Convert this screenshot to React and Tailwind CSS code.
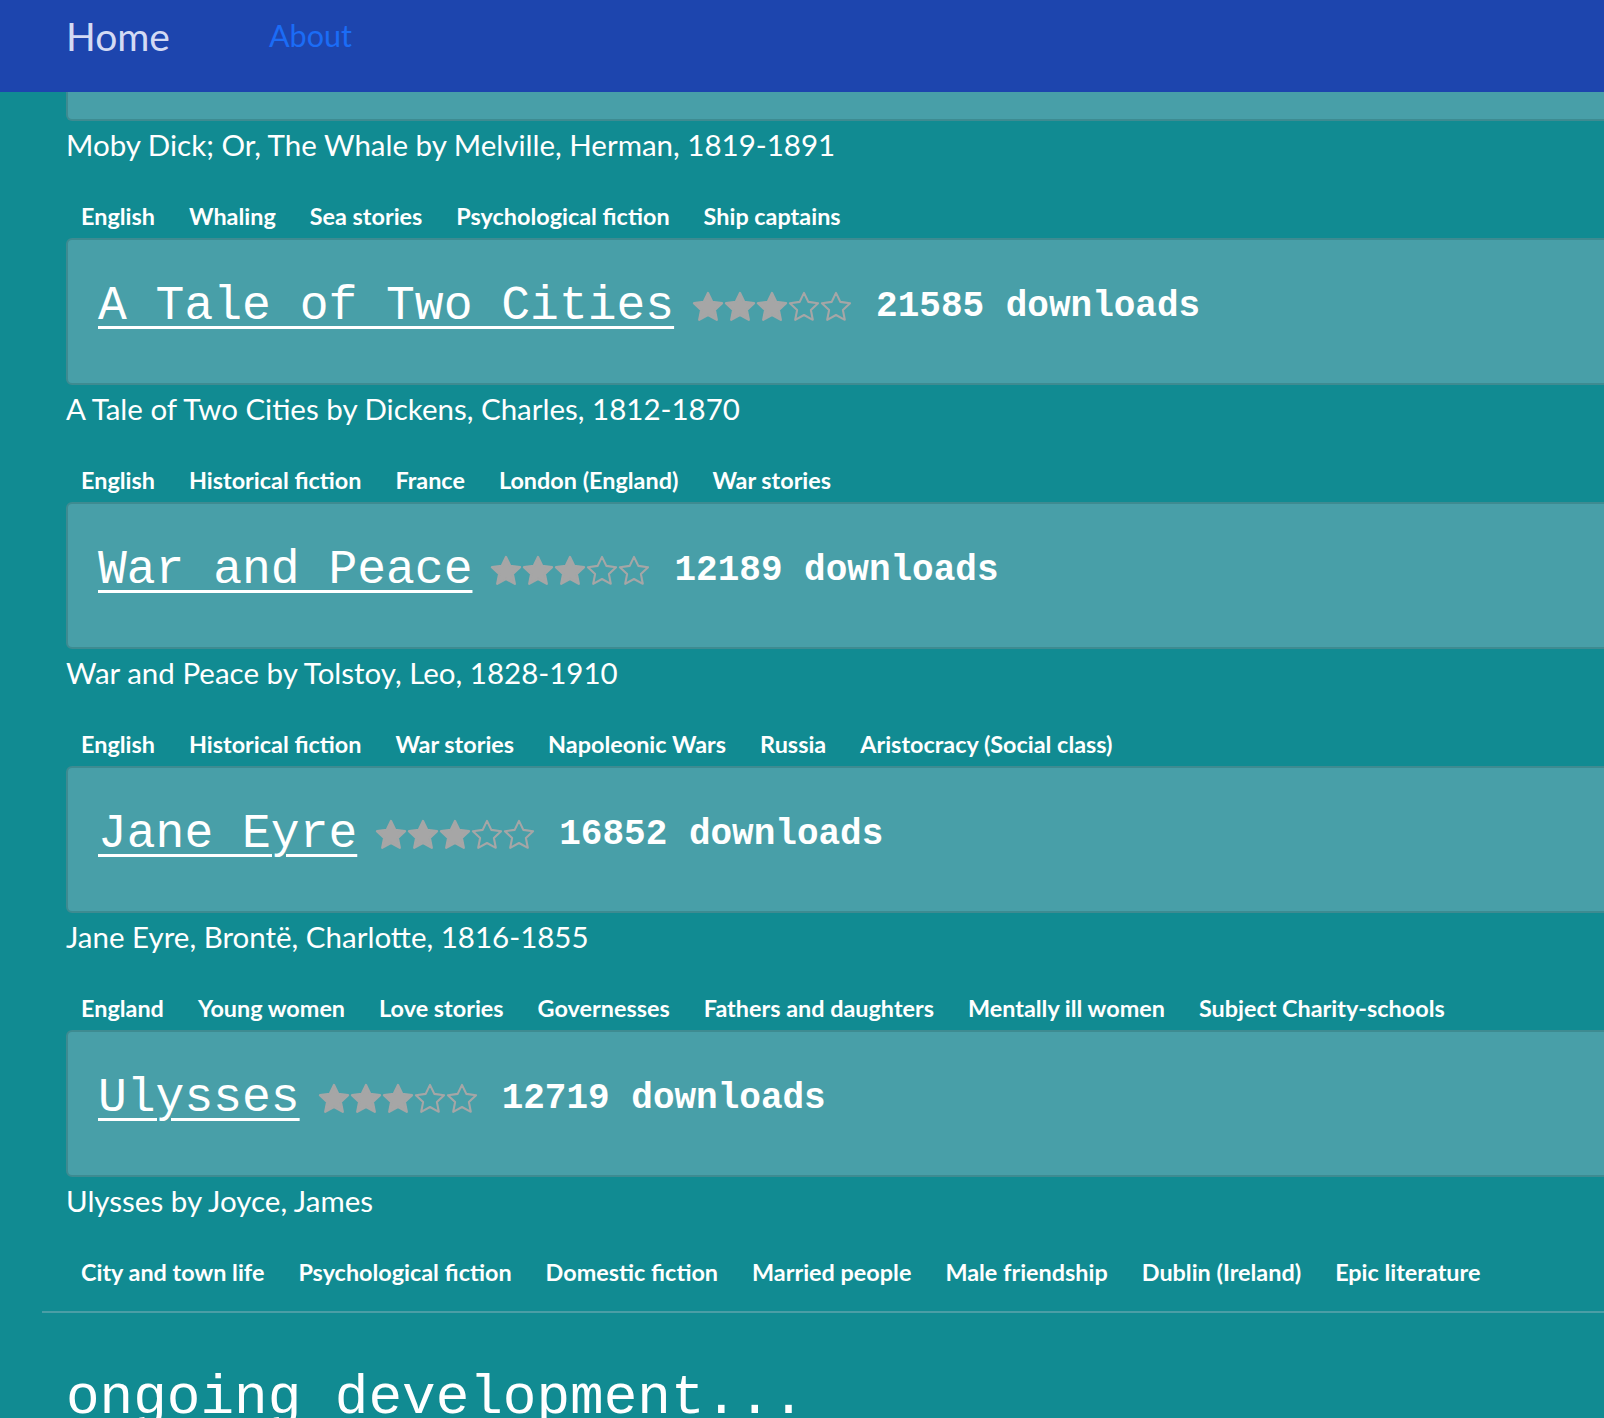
import React from "react";

const books = [
  {
    title: "A Tale of Two Cities",
    downloads: 21585,
    desc: "A Tale of Two Cities by Dickens, Charles, 1812-1870",
    tags: ["English", "Historical fiction", "France", "London (England)", "War stories"],
  },
  {
    title: "War and Peace",
    downloads: 12189,
    desc: "War and Peace by Tolstoy, Leo, 1828-1910",
    tags: ["English", "Historical fiction", "War stories", "Napoleonic Wars", "Russia", "Aristocracy (Social class)"],
  },
  {
    title: "Jane Eyre",
    downloads: 16852,
    desc: "Jane Eyre, Brontë, Charlotte, 1816-1855",
    tags: ["England", "Young women", "Love stories", "Governesses", "Fathers and daughters", "Mentally ill women", "Subject Charity-schools"],
  },
  {
    title: "Ulysses",
    downloads: 12719,
    desc: "Ulysses by Joyce, James",
    tags: ["City and town life", "Psychological fiction", "Domestic fiction", "Married people", "Male friendship", "Dublin (Ireland)", "Epic literature"],
  },
];

const sans = { fontFamily: "Lato, 'Open Sans', sans-serif" };
const mono = { fontFamily: "'Liberation Mono', 'Courier New', monospace" };

function Star({ filled }) {
  return (
    <svg width="32" height="32" viewBox="2 2 20 20" className="shrink-0">
      <path
        d="M12 3.2l2.7 5.6 6.1.8-4.5 4.3 1.2 6.1L12 17l-5.5 3 1.2-6.1-4.5-4.3 6.1-.8z"
        fill={filled ? "#a6a6a6" : "none"}
        stroke="#a6a6a6"
        strokeWidth={filled ? 1.4 : 1.3}
        strokeLinejoin="round"
      />
    </svg>
  );
}

function Tags({ tags }) {
  return (
    <div className="flex h-[42px] items-center pl-[15px]" style={sans}>
      {tags.map((t) => (
        <span key={t} className="px-[17px] first:pl-0 text-[23.4px] font-bold text-white leading-none">
          {t}
        </span>
      ))}
    </div>
  );
}

function Card({ book }) {
  return (
    <div className="-mr-6 flex h-[147px] items-start rounded-[6px] border-2 border-[#3e8b91] bg-[#489fa8] pl-[30px] pt-[36px]">
      <div className="flex items-center">
        <a href="#" className="text-[48px] leading-[60px] text-white underline decoration-[3px] underline-offset-[7px]" style={mono}>
          {book.title}
        </a>
        <div className="ml-[18px] mt-[2px] flex items-center">
          <Star filled />
          <Star filled />
          <Star filled />
          <Star />
          <Star />
        </div>
        <span className="ml-[24px] mt-[2px] text-[36px] font-bold text-white" style={mono}>
          {book.downloads} downloads
        </span>
      </div>
    </div>
  );
}

export default function App() {
  return (
    <div className="min-h-screen w-full overflow-hidden bg-[#118b92]">
      <header className="flex h-[92px] items-start bg-[#1d45ae] pl-[66px]" style={sans}>
        <span className="mt-[12px] text-[39px] leading-[48px] text-[#d3daf4]">Home</span>
        <span className="ml-[99px] mt-[14px] text-[30.5px] leading-[42px] text-[#1b6cf6]">About</span>
      </header>
      <div className="pl-[66px]">
        <div className="-mr-6 h-[29px] rounded-b-[6px] border-2 border-t-0 border-[#3e8b91] bg-[#489fa8]" />
        <div className="flex h-[48px] items-center text-[29.5px] text-white" style={sans}>
          Moby Dick; Or, The Whale by Melville, Herman, 1819-1891
        </div>
        <div className="mt-[27px]">
          <Tags tags={["English", "Whaling", "Sea stories", "Psychological fiction", "Ship captains"]} />
        </div>
        {books.map((b) => (
          <div key={b.title}>
            <Card book={b} />
            <div className="flex h-[48px] items-center text-[29.5px] text-white" style={sans}>
              {b.desc}
            </div>
            <div className="mt-[27px]">
              <Tags tags={b.tags} />
            </div>
          </div>
        ))}
      </div>
      <div className="ml-[42px] mt-[17px] border-t-2 border-[#4a9ea6]" />
      <div className="pl-[66px] pt-[45px] text-[56px] leading-[80px] text-white" style={mono}>
        ongoing development...
      </div>
    </div>
  );
}
